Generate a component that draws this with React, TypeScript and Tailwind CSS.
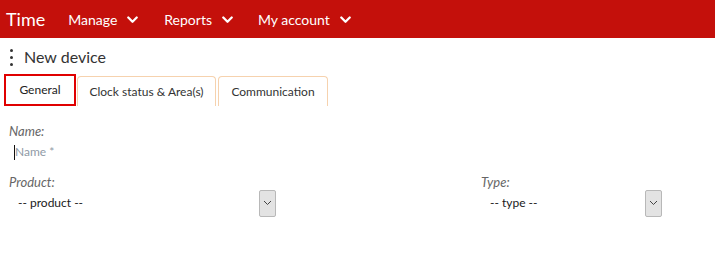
import React from "react";

const Chevron = () => (
  <svg width="11" height="8" viewBox="0 0 11 8" className="ml-[10px] mt-[1px]">
    <path d="M1.3 1.5 L5.5 5.7 L9.7 1.5" stroke="white" strokeWidth="2.3" fill="none" strokeLinecap="round" strokeLinejoin="round" />
  </svg>
);

const SmallChevron = () => (
  <svg width="9" height="6" viewBox="0 0 9 6">
    <path d="M1 1 L4.5 4.5 L8 1" stroke="#444" strokeWidth="1" fill="none" />
  </svg>
);

export default function App() {
  return (
    <div className="w-[715px] h-[278px] bg-white" style={{ fontFamily: "Lato, 'Open Sans', sans-serif" }}>
      <div className="h-[38px] bg-[#c4100b] flex items-center text-white">
        <span className="ml-[6px] text-[18px] leading-none">Time</span>
        <div className="flex items-center ml-[23px] text-[14px]">
          <span>Manage</span>
          <Chevron />
        </div>
        <div className="flex items-center ml-[26px] text-[14px]">
          <span>Reports</span>
          <Chevron />
        </div>
        <div className="flex items-center ml-[25px] text-[14px]">
          <span>My account</span>
          <Chevron />
        </div>
      </div>

      <div className="flex items-center h-[36px] pt-[2px] pl-[10px]">
        <div className="flex flex-col gap-[4px] mt-[1px]">
          <div className="w-[3px] h-[3px] rounded-full bg-[#333]" />
          <div className="w-[3px] h-[3px] rounded-full bg-[#333]" />
          <div className="w-[3px] h-[3px] rounded-full bg-[#333]" />
        </div>
        <span className="ml-[11px] text-[16px] text-[#333]">New device</span>
      </div>

      <div className="flex items-end pl-[4px] h-[32px]">
        <div className="w-[72px] h-[32px] border-2 border-[#e00000] flex items-center justify-center text-[12px] text-[#222]">
          General
        </div>
        <div className="ml-[1px] w-[139px] h-[30px] border border-b-0 border-[#f6d2ae] rounded-t-[4px] flex items-center justify-center text-[12px] text-[#333]">
          Clock status &amp; Area(s)
        </div>
        <div className="ml-[2px] w-[110px] h-[30px] border border-b-0 border-[#f6d2ae] rounded-t-[4px] flex items-center justify-center text-[12px] text-[#333]">
          Communication
        </div>
      </div>

      <div className="pl-[9px] pt-[18px]">
        <div className="text-[13px] italic text-[#666] leading-[14px]">Name:</div>
        <div className="flex items-center h-[20px] mt-[4px] pl-[5px]">
          <div className="w-[1px] h-[15px] bg-[#111]" />
          <span className="text-[12px] text-[#8f9aa6]">Name *</span>
        </div>
      </div>

      <div className="flex pl-[9px] pt-[13px]">
        <div className="w-[472px]">
          <div className="text-[13px] italic text-[#666] leading-[14px]">Product:</div>
          <div className="flex items-center h-[28px]">
            <span className="ml-[9px] w-[241px] text-[12px] text-[#1a1a1a]">-- product --</span>
            <div className="w-[17px] h-[27px] bg-[#e3e3e3] border border-[#b8b8b8] rounded-[2px] flex items-center justify-center">
              <SmallChevron />
            </div>
          </div>
        </div>
        <div>
          <div className="text-[13px] italic text-[#666] leading-[14px]">Type:</div>
          <div className="flex items-center h-[28px]">
            <span className="ml-[9px] w-[155px] text-[12px] text-[#1a1a1a]">-- type --</span>
            <div className="w-[17px] h-[27px] bg-[#e3e3e3] border border-[#b8b8b8] rounded-[2px] flex items-center justify-center">
              <SmallChevron />
            </div>
          </div>
        </div>
      </div>
    </div>
  );
}
